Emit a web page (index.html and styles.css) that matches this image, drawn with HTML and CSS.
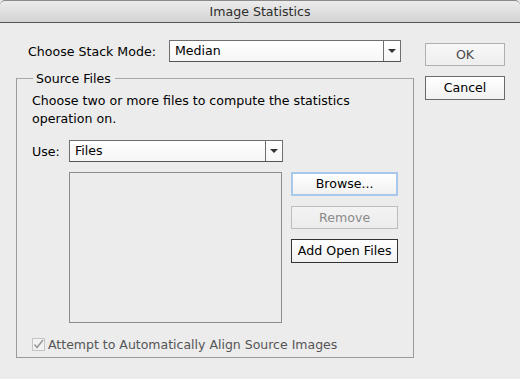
FILE: index.html
```html
<!DOCTYPE html>
<html>
<head>
<meta charset="utf-8">
<link rel="stylesheet" href="styles.css">
</head>
<body>
<div class="window">
  <div class="titlebar">Image Statistics</div>
  <div class="content">
    <div class="main">
      <div class="row mode-row">
        <span class="label mode-label">Choose Stack Mode:</span>
        <div class="select mode-select">
          <span class="select-value">Median</span>
          <span class="select-arrow"><span class="tri"></span></span>
        </div>
      </div>
      <fieldset class="group">
        <legend class="legend">Source Files</legend>
        <p class="desc">Choose two or more files to compute the statistics operation on.</p>
        <div class="row use-row">
          <span class="label use-label">Use:</span>
          <div class="select use-select">
            <span class="select-value">Files</span>
            <span class="select-arrow"><span class="tri"></span></span>
          </div>
        </div>
        <div class="files-row">
          <div class="listbox"></div>
          <div class="file-buttons">
            <div class="btn btn-focus">Browse...</div>
            <div class="btn btn-disabled">Remove</div>
            <div class="btn btn-strong">Add Open Files</div>
          </div>
        </div>
        <div class="check-row">
          <span class="checkbox">
            <svg width="13" height="13" viewBox="0 0 13 13"><path d="M2.5 6.5 L5 9.5 L11 2" fill="none" stroke="#9a9a9a" stroke-width="1.6"/></svg>
          </span>
          <span class="check-label">Attempt to Automatically Align Source Images</span>
        </div>
      </fieldset>
    </div>
    <div class="side">
      <div class="btn btn-ok">OK</div>
      <div class="btn btn-cancel">Cancel</div>
    </div>
  </div>
</div>
</body>
</html>
```

FILE: styles.css
```css
* { box-sizing: border-box; }
html, body { margin: 0; padding: 0; }
body {
  width: 520px;
  height: 379px;
  background: #ececec;
  font-family: "DejaVu Sans", "Liberation Sans", sans-serif;
  font-size: 12.6px;
  color: #000;
  overflow: hidden;
}
.window { width: 520px; height: 379px; }
.titlebar {
  height: 23px;
  line-height: 22px;
  text-align: center;
  font-size: 12.6px;
  color: #2d2d2d;
  background: linear-gradient(#ececec, #d3d3d3);
  border-top: 1px solid #8a8a8a;
  border-bottom: 1px solid #555;
  border-radius: 5px 5px 0 0;
}
.content {
  display: flex;
  padding: 17px 15px 0 16px;
}
.main { width: 398px; }
.side {
  margin-left: 11px;
  padding-top: 3px;
  display: flex;
  flex-direction: column;
  gap: 10px;
  width: 80px;
}
.row { display: flex; align-items: center; }
.mode-row { padding-left: 12px; height: 22px; }
.mode-label { width: 141px; }
.select {
  display: flex;
  height: 22px;
  background: linear-gradient(#ffffff, #f6f6f6);
  border: 1px solid #6f6f6f;
  border-bottom-color: #555;
}
.mode-select { width: 232px; }
.select-value { flex: 1; padding-left: 5px; line-height: 20px; }
.select-arrow {
  width: 17px;
  border-left: 1px solid #6f6f6f;
  display: flex;
  align-items: center;
  justify-content: center;
}
.tri {
  width: 0; height: 0;
  border-left: 4px solid transparent;
  border-right: 4px solid transparent;
  border-top: 4px solid #333;
}
.group {
  margin: 9px 0 0 0;
  padding: 0 15px 0 15px;
  border: 1px solid #9a9a9a;
  border-top-color: #a8a8a8;
  height: 287px;
  min-width: 0;
}
.legend {
  padding: 0 4px 0 3px;
  margin-left: 1px;
}
.desc {
  margin: 6px 0 0 0;
  line-height: 18px;
  width: 345px;
}
.use-row { margin-top: 12px; height: 22px; }
.use-label { width: 37px; }
.use-select { width: 214px; }
.files-row {
  display: flex;
  margin-top: 10px;
  padding-left: 37px;
}
.listbox {
  width: 214px;
  height: 151px;
  background: #ececec;
  border: 1px solid #8c8c8c;
}
.file-buttons {
  margin-left: 9px;
  display: flex;
  flex-direction: column;
  gap: 10px;
  width: 107px;
}
.btn {
  height: 24px;
  line-height: 22px;
  text-align: center;
  border: 1px solid #6a6a6a;
  background: linear-gradient(#ffffff, #f1f1f1);
  color: #000;
}
.btn-ok {
  height: 23px;
  border-color: #b0b0b0;
  background: linear-gradient(#f7f7f7, #eeeeee);
  color: #4a4a4a;
}
.btn-focus {
  border: 2px solid #a8c8ec;
  line-height: 20px;
}
.btn-disabled {
  height: 23px;
  border-color: #bdbdbd;
  background: linear-gradient(#f3f3f3, #ececec);
  color: #8a8a8a;
}
.btn-strong { border-color: #333; }
.check-row {
  display: flex;
  align-items: center;
  margin-top: 14px;
}
.checkbox {
  width: 13px;
  height: 13px;
  border: 1px solid #c4c4c4;
  background: #f2f2f2;
  display: flex;
  align-items: center;
  justify-content: center;
  margin-right: 3px;
}
.checkbox svg { display: block; margin: -1px; }
.check-label { color: #555; font-size: 12.5px; }
```
